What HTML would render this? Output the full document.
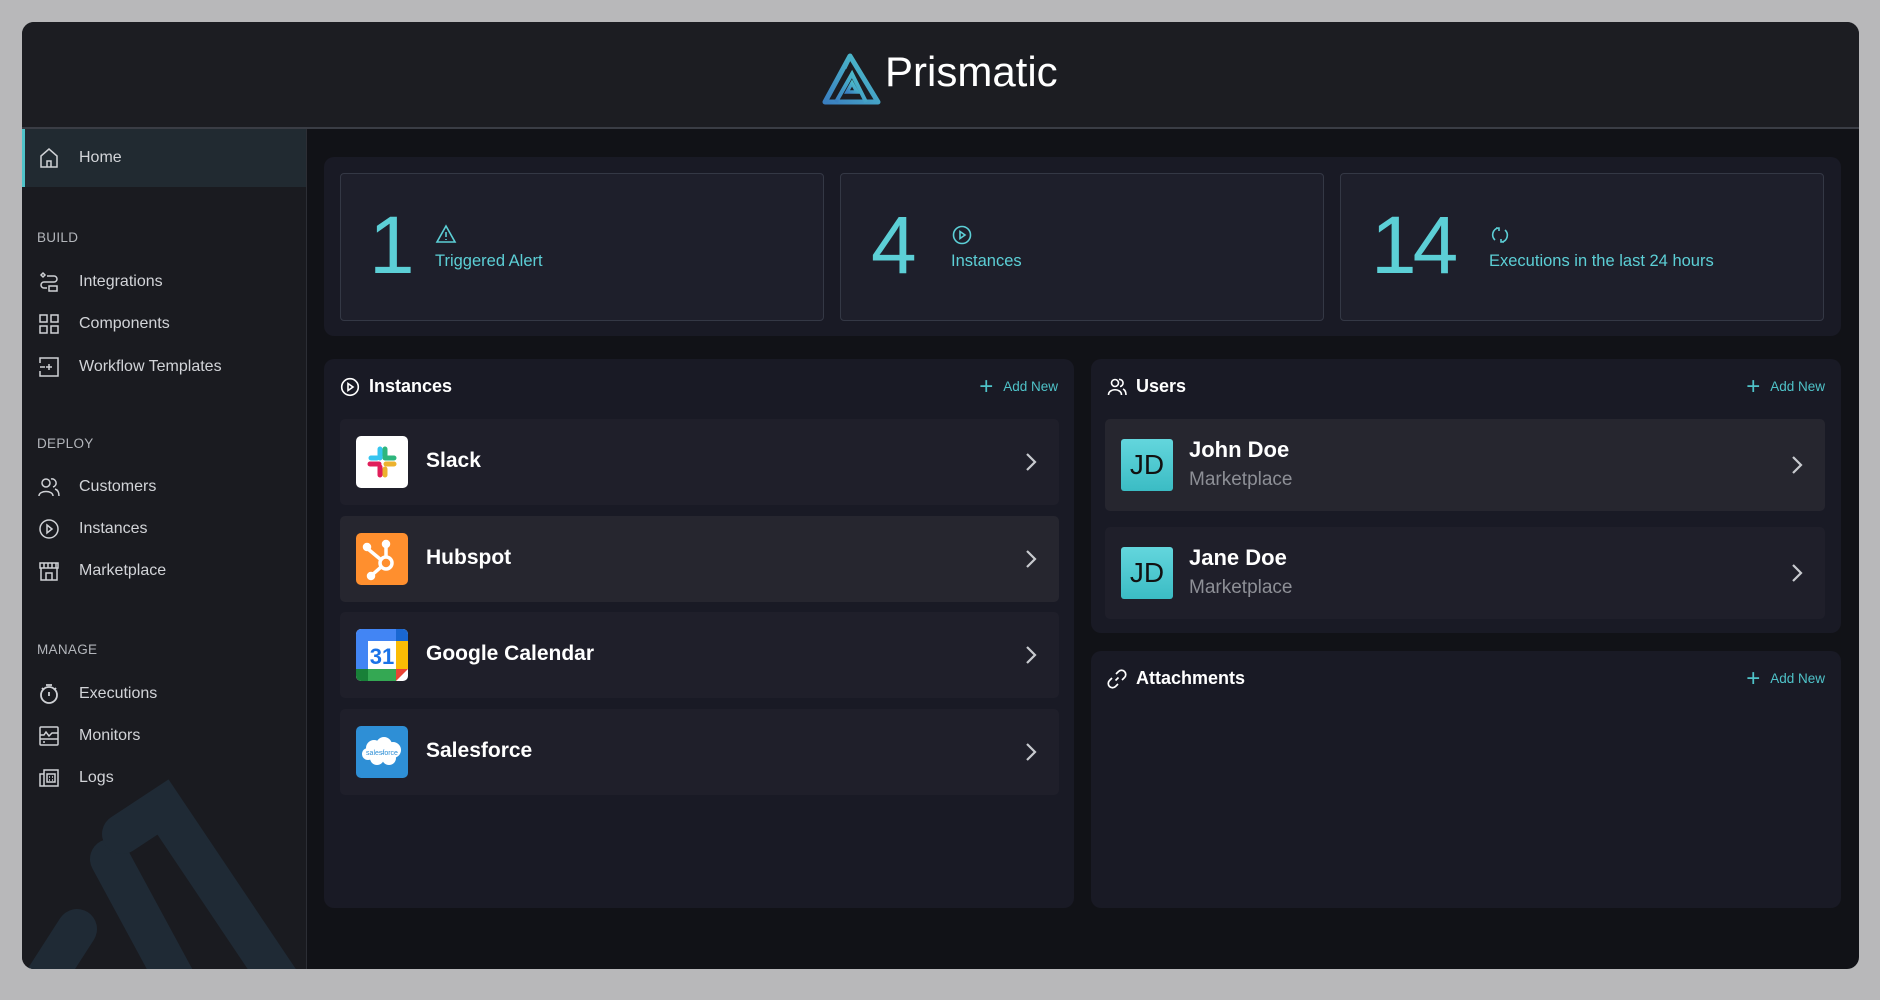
<!DOCTYPE html>
<html><head><meta charset="utf-8"><style>
*{box-sizing:border-box;margin:0;padding:0}
body{width:1880px;height:1000px;background:#b8b8ba;font-family:"Liberation Sans",sans-serif;position:relative;overflow:hidden}
.a{position:absolute}
#frame{left:22px;top:22px;width:1837px;height:947px;background:#111217;border-radius:12px;overflow:hidden}
#hdr{left:0;top:0;width:1837px;height:107px;background:#1c1d22;border-bottom:2px solid #3a3d45}
#side{left:0;top:107px;width:285px;height:840px;background:#1a1b20;border-right:1px solid #2c2e35;overflow:hidden}
.nav{position:absolute;left:0;width:284px;height:40px;display:flex;align-items:center;color:#d2d4d8;font-size:16px}
.nav svg{position:absolute;left:15px;width:24px;height:24px}
.nav span{position:absolute;left:57px}
.sec{position:absolute;left:15px;color:#b3b6bb;font-size:13.5px;letter-spacing:.3px}
.panel{position:absolute;background:#191a25;border-radius:10px}
.card{position:absolute;top:16px;width:484px;height:148px;background:#1e1f2b;border:1.5px solid #343845;border-radius:4px}
.num{position:absolute;top:31px;font-size:82px;color:#5ccfd6;line-height:1}
.lbl{position:absolute;top:78px;font-size:16.5px;color:#5ccfd6}
.ico{position:absolute;top:50px}
.ph{position:absolute;top:17px;left:16px;display:flex;align-items:center;color:#fff;font-weight:bold;font-size:18px}
.ph svg{margin-right:9px}
.add{position:absolute;top:20px;right:16px;color:#4fc3c9;font-size:13.5px;display:flex;align-items:center}
.add b{font-weight:normal;font-size:24px;margin-right:10px;line-height:14px}
.row{position:absolute;left:16px;height:86px;background:#1f1f2a;border-radius:5px}
.row .logo{position:absolute;left:16px;top:17px;width:52px;height:52px;border-radius:5px;overflow:hidden}
.row .nm{position:absolute;left:86px;top:30px;color:#fff;font-size:21px;font-weight:bold}
.chev{position:absolute;right:22px;top:33px}
.urow{position:absolute;left:14px;width:720px;height:92px;background:#1f1f2a;border-radius:5px}
.av{position:absolute;left:16px;top:20px;width:52px;height:52px;border-radius:3px;background:linear-gradient(#63d6dd,#3bbcc4);color:#111;font-size:28px;display:flex;align-items:center;justify-content:center}
.un{position:absolute;left:84px;top:18px;color:#fff;font-size:22px;font-weight:bold}
.us{position:absolute;left:84px;top:50px;color:#8d8f96;font-size:19px}
</style></head><body>
<div id="frame" class="a">
 <div id="hdr" class="a">
  <svg class="a" style="left:800px;top:28px" width="62" height="56" viewBox="0 0 62 56">
   <defs><linearGradient id="g" x1="0" y1="1" x2="1" y2="0"><stop offset="0" stop-color="#3a7fc0"/><stop offset="1" stop-color="#4fc6cc"/></linearGradient></defs>
   <path d="M3 52 L28 6 L56 52 Z M28 6 L22 18" fill="none" stroke="url(#g)" stroke-width="5" stroke-linejoin="round"/>
   <path d="M14 52 L30 24 L44 52" fill="none" stroke="url(#g)" stroke-width="4"/>
   <path d="M25 42 L30 33 L35 42 Z" fill="none" stroke="url(#g)" stroke-width="3.5"/>
  </svg>
  <div class="a" style="left:863px;top:26px;color:#fff;font-size:42px">Prismatic</div>
 </div>
 <div id="side" class="a">
  <svg class="a" style="left:0;top:0" width="285" height="840"><g stroke="#1f2a35" stroke-width="40" stroke-linecap="round" fill="none"><path d="M180 900 L88 730"/><path d="M100 705 L141 678 L290 900"/><path d="M55 800 L10 870"/></g></svg>
  <div class="nav" style="top:0;height:58px;background:#212a31;border-left:3px solid #4fc3c9"><svg viewBox="0 0 24 24" fill="none" stroke="#cfd1d5" stroke-width="1.5" style="left:12px"><path d="M4 10 L12 3 L20 10 V21 H4 Z M10 21 V15 H14 V21"/></svg><span style="left:54px">Home</span></div>
  <div class="sec" style="top:101px">BUILD</div>
  <div class="nav" style="top:133px"><svg viewBox="0 0 24 24" fill="none" stroke="#cfd1d5" stroke-width="1.5"><path d="M6 3 L8 5 L6 7 L4 5Z M10 6 H17 A3 3 0 0 1 17 12 H7 A3 3 0 0 0 7 18 H10 M12 16 H20 V21 H12Z"/></svg><span>Integrations</span></div>
  <div class="nav" style="top:175px"><svg viewBox="0 0 24 24" fill="none" stroke="#cfd1d5" stroke-width="1.5"><rect x="3" y="3" width="7" height="7"/><rect x="14" y="3" width="7" height="7"/><rect x="3" y="14" width="7" height="7"/><rect x="14" y="14" width="7" height="7"/></svg><span>Components</span></div>
  <div class="nav" style="top:218px"><svg viewBox="0 0 24 24" fill="none" stroke="#cfd1d5" stroke-width="1.5"><path d="M3 8 V3 H21 V21 H3 V16 M3 12 H8 M12 9 V15 M9 12 H15"/></svg><span>Workflow Templates</span></div>
  <div class="sec" style="top:307px">DEPLOY</div>
  <div class="nav" style="top:338px"><svg viewBox="0 0 24 24" fill="none" stroke="#cfd1d5" stroke-width="1.5"><circle cx="9" cy="8" r="4"/><path d="M2 21 C2 15 16 15 16 21 M14 4 A4 4 0 0 1 16 12 M18 14 C21 15 22 18 22 21"/></svg><span>Customers</span></div>
  <div class="nav" style="top:380px"><svg viewBox="0 0 24 24" fill="none" stroke="#cfd1d5" stroke-width="1.5"><circle cx="12" cy="12" r="9"/><path d="M10 8 L15 12 L10 16Z"/></svg><span>Instances</span></div>
  <div class="nav" style="top:422px"><svg viewBox="0 0 24 24" fill="none" stroke="#cfd1d5" stroke-width="1.5"><path d="M3 4 H21 V9 H3Z M4 9 V21 H20 V9 M9 21 V14 H15 V21 M7 4 V9 M11 4 V9 M15 4 V9 M19 4 V9"/></svg><span>Marketplace</span></div>
  <div class="sec" style="top:513px">MANAGE</div>
  <div class="nav" style="top:545px"><svg viewBox="0 0 24 24" fill="none" stroke="#cfd1d5" stroke-width="1.8"><circle cx="12" cy="13" r="8"/><path d="M9 3 H15 M12 10 V14 M5 6 L7 8 M19 6 L17 8"/></svg><span>Executions</span></div>
  <div class="nav" style="top:587px"><svg viewBox="0 0 24 24" fill="none" stroke="#cfd1d5" stroke-width="1.5"><rect x="3" y="3" width="18" height="18" rx="1"/><path d="M3 11 H7 L9 8 L12 12 L15 9 H21 M3 15 H21 M6 18 H8"/></svg><span>Monitors</span></div>
  <div class="nav" style="top:629px"><svg viewBox="0 0 24 24" fill="none" stroke="#cfd1d5" stroke-width="1.5"><path d="M7 4 H21 V20 H3 V8 H7 Z M7 8 V20 M10 8 H18 V16 H10 Z M12 11 H13 M15 11 H16 M12 14 H13 M15 14 H16"/></svg><span>Logs</span></div>
 </div>

 <div class="panel" style="left:302px;top:135px;width:1517px;height:179px">
  <div class="card" style="left:16px">
   <div class="num" style="left:28px">1</div>
   <svg class="ico" style="left:94px" width="22" height="20" viewBox="0 0 22 20" fill="none" stroke="#5ccfd6" stroke-width="1.6"><path d="M11 2 L20 18 H2 Z M11 8 V13 M11 15 V16"/></svg>
   <div class="lbl" style="left:94px">Triggered Alert</div>
  </div>
  <div class="card" style="left:516px">
   <div class="num" style="left:30px">4</div>
   <svg class="ico" style="left:110px" width="22" height="22" viewBox="0 0 22 22" fill="none" stroke="#5ccfd6" stroke-width="1.6"><circle cx="11" cy="11" r="8.5"/><path d="M9 7.5 L14 11 L9 14.5Z"/></svg>
   <div class="lbl" style="left:110px">Instances</div>
  </div>
  <div class="card" style="left:1016px">
   <div class="num" style="left:30px;letter-spacing:-4px">14</div>
   <svg class="ico" style="left:148px" width="22" height="22" viewBox="0 0 22 22" fill="none" stroke="#5ccfd6" stroke-width="1.6"><path d="M6 16 A7 7 0 0 1 9 4 M7 4 H10 V7 M16 6 A7 7 0 0 1 13 18 M15 18 H12 V15"/></svg>
   <div class="lbl" style="left:148px">Executions in the last 24 hours</div>
  </div>
 </div>

 <div class="panel" style="left:302px;top:337px;width:750px;height:549px">
  <div class="ph"><svg width="20" height="20" viewBox="0 0 20 20" fill="none" stroke="#fff" stroke-width="1.6"><circle cx="10" cy="10" r="8.3"/><path d="M8 6.5 L13 10 L8 13.5Z"/></svg>Instances</div>
  <div class="add"><b>+</b>Add New</div>
  <div class="row" style="top:60px;width:719px"><div class="logo" style="background:#fff"><svg width="52" height="52" viewBox="0 0 52 52" stroke-linecap="round" stroke-width="5"><path d="M24 13 V22" stroke="#36c5f0"/><path d="M15 22 H21" stroke="#36c5f0"/><path d="M29 13 V20" stroke="#2eb67d"/><path d="M29 22 H38" stroke="#2eb67d"/><path d="M14 28 H23" stroke="#e01e5a"/><path d="M24 31 V39" stroke="#e01e5a"/><path d="M30 28 H38" stroke="#ecb22e"/><path d="M29 33 V39" stroke="#ecb22e"/></svg></div><div class="nm">Slack</div><svg class="chev" width="12" height="20" viewBox="0 0 12 20" fill="none" stroke="#c8cacf" stroke-width="2.2"><path d="M2 2 L10 10 L2 18"/></svg></div>
  <div class="row" style="top:157px;width:719px;background:#26262f"><div class="logo" style="background:#ff8f2e"><svg width="52" height="52" viewBox="0 0 52 52" fill="none" stroke="#fff" stroke-width="3.5"><circle cx="30" cy="30" r="6"/><path d="M30 24 V12 M24 26 L12 16 M25 34 L16 42"/><circle cx="30" cy="11" r="2.5" fill="#fff"/><circle cx="11" cy="14" r="2.5" fill="#fff"/><circle cx="15" cy="43" r="2.5" fill="#fff"/></svg></div><div class="nm">Hubspot</div><svg class="chev" width="12" height="20" viewBox="0 0 12 20" fill="none" stroke="#c8cacf" stroke-width="2.2"><path d="M2 2 L10 10 L2 18"/></svg></div>
  <div class="row" style="top:253px;width:719px"><div class="logo" style="background:#fff"><svg width="52" height="52" viewBox="0 0 52 52"><rect x="0" y="0" width="40" height="12" fill="#4285f4"/><rect x="40" y="0" width="12" height="12" fill="#1967d2"/><rect x="0" y="12" width="12" height="28" fill="#4285f4"/><rect x="40" y="12" width="12" height="28" fill="#fbbc04"/><rect x="0" y="40" width="12" height="12" fill="#188038"/><rect x="12" y="40" width="28" height="12" fill="#34a853"/><path d="M40 40 H52 L40 52Z" fill="#ea4335"/><text x="26" y="35" text-anchor="middle" font-size="22" font-family="Liberation Sans" fill="#1a73e8" font-weight="bold">31</text></svg></div><div class="nm">Google Calendar</div><svg class="chev" width="12" height="20" viewBox="0 0 12 20" fill="none" stroke="#c8cacf" stroke-width="2.2"><path d="M2 2 L10 10 L2 18"/></svg></div>
  <div class="row" style="top:350px;width:719px"><div class="logo" style="background:#2e8fd6"><svg width="52" height="52" viewBox="0 0 52 52"><g fill="#fff"><circle cx="18" cy="22" r="8"/><circle cx="28" cy="19" r="8"/><circle cx="37" cy="24" r="8"/><circle cx="33" cy="32" r="7"/><circle cx="21" cy="32" r="7"/><circle cx="12" cy="28" r="6"/></g><text x="26" y="29" text-anchor="middle" font-size="7" font-family="Liberation Sans" fill="#2e8fd6">salesforce</text></svg></div><div class="nm">Salesforce</div><svg class="chev" width="12" height="20" viewBox="0 0 12 20" fill="none" stroke="#c8cacf" stroke-width="2.2"><path d="M2 2 L10 10 L2 18"/></svg></div>
 </div>

 <div class="panel" style="left:1069px;top:337px;width:750px;height:274px">
  <div class="ph"><svg width="20" height="20" viewBox="0 0 20 20" fill="none" stroke="#fff" stroke-width="1.6"><circle cx="8" cy="6" r="3.5"/><path d="M1.5 18 C1.5 11 14.5 11 14.5 18 M12 2.5 A3.5 3.5 0 0 1 13 9.5 M16 12 C18 13 19 15 19 18"/></svg>Users</div>
  <div class="add"><b>+</b>Add New</div>
  <div class="urow" style="top:60px;background:#26262f"><div class="av">JD</div><div class="un">John Doe</div><div class="us">Marketplace</div><svg class="chev" style="top:36px" width="12" height="20" viewBox="0 0 12 20" fill="none" stroke="#c8cacf" stroke-width="2.2"><path d="M2 2 L10 10 L2 18"/></svg></div>
  <div class="urow" style="top:168px"><div class="av">JD</div><div class="un">Jane Doe</div><div class="us">Marketplace</div><svg class="chev" style="top:36px" width="12" height="20" viewBox="0 0 12 20" fill="none" stroke="#c8cacf" stroke-width="2.2"><path d="M2 2 L10 10 L2 18"/></svg></div>
 </div>

 <div class="panel" style="left:1069px;top:629px;width:750px;height:257px">
  <div class="ph"><svg width="20" height="20" viewBox="0 0 20 20" fill="none" stroke="#fff" stroke-width="1.7"><path d="M8.5 11.5 L11.5 8.5 M9 5 L11.5 2.5 A3.5 3.5 0 0 1 17.5 8.5 L15 11 M11 15 L8.5 17.5 A3.5 3.5 0 0 1 2.5 11.5 L5 9"/></svg>Attachments</div>
  <div class="add"><b>+</b>Add New</div>
 </div>
</div>
</body></html>
